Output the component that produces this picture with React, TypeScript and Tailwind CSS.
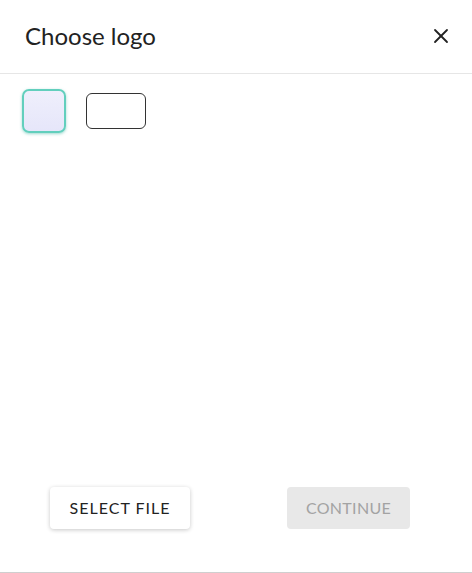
import { X } from "lucide-react";

// ロゴ選択ダイアログ
const LogoTile = ({ selected }: { selected?: boolean }) => {
    if (selected) {
        return (
            <button
                type="button"
                className="
                    w-[44px] h-[44px] rounded-[7px] border-2 border-[#62cfbd]
                    bg-gradient-to-b from-[#efeffc] to-[#e6e6fa]
                    shadow-[0_1px_3px_rgba(60,180,160,0.5)]
                "
            />
        );
    }
    return (
        <button
            type="button"
            className="w-[60px] h-[36px] rounded-[6px] border border-[#333] bg-white"
        />
    );
};

const Header = () => {
    return (
        <div className="flex items-center justify-between h-[74px] px-[25px] border-b border-[#e6e6e6]">
            <h1 className="text-[24px] text-[#222] pb-[1px]">Choose logo</h1>
            <button type="button" className="text-[#222] mr-[-6px] mb-[2px]">
                <X size={24} strokeWidth={1.8} />
            </button>
        </div>
    );
};

const Footer = () => {
    return (
        <div className="flex justify-between items-center pl-[50px] pr-[62px] pb-[43px]">
            <button
                type="button"
                className="
                    w-[140px] h-[42px] rounded-[4px] bg-white
                    text-[16px] tracking-[1px] text-[#222]
                    shadow-[0_1px_4px_rgba(0,0,0,0.22)]
                "
            >
                SELECT FILE
            </button>
            <button
                type="button"
                disabled
                className="
                    w-[123px] h-[42px] rounded-[4px] bg-[#e8e8e8]
                    text-[16px] tracking-[0.3px] text-[#a3a3a3]
                "
            >
                CONTINUE
            </button>
        </div>
    );
};

export default function App() {
    return (
        <div
            className="flex flex-col w-[472px] h-[573px] bg-white border-b border-[#cfcfcf]"
            style={{ fontFamily: "Lato, 'Noto Sans', sans-serif" }}
        >
            <Header />
            <div className="flex-1">
                <div className="flex items-center gap-[20px] pl-[22px] pt-[15px]">
                    <LogoTile selected />
                    <LogoTile />
                </div>
            </div>
            <Footer />
        </div>
    );
}
